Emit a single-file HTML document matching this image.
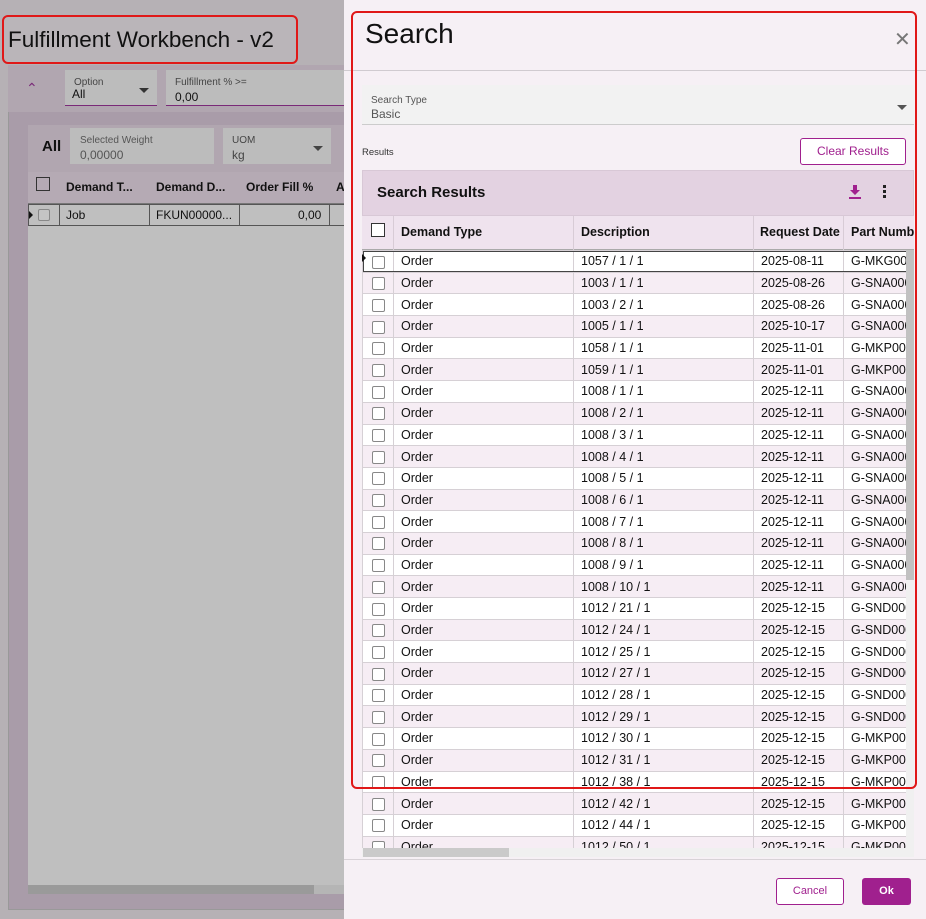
<!DOCTYPE html>
<html><head><meta charset="utf-8"><style>
*{margin:0;padding:0;box-sizing:border-box}
body{width:926px;height:919px;overflow:hidden;position:relative;background:#b6b1b5;font-family:"Liberation Sans",sans-serif;color:#111}
.a{position:absolute}
.cb{position:absolute;width:12px;height:12px;border:1px solid #888;border-radius:2px;background:#fff}
table.t{border-collapse:collapse;table-layout:fixed;width:544px;font-size:12.5px;background:#fff}
table.t td{height:21.7px;border:1px solid #d6d0d5;padding:0 0 0 7px;white-space:nowrap;overflow:hidden;line-height:20px}
table.t tr:nth-child(even) td{background:#f6edf4}
table.t td.k{padding:0;text-align:center}
table.t td.k i{display:inline-block;width:13px;height:13px;border:1px solid #888;border-radius:2px;background:#fff;vertical-align:middle}
</style></head><body>
<div class="a" style="left:3px;top:16px;width:294px;height:47px;background:#bab5b9;border-radius:6px"></div>
<div class="a" style="left:8px;top:27px;font-size:22.5px;color:#111">Fulfillment Workbench - v2</div>
<div class="a" style="left:2px;top:15px;width:296px;height:49px;border:2px solid #e01818;border-radius:6px"></div>
<div class="a" style="left:8px;top:65px;width:336px;height:845px;background:#a99ca9;border-left:1px solid #999;border-bottom:1px solid #999"></div>
<div class="a" style="left:8px;top:65px;width:336px;height:47px;background:#b1a6b0"></div>
<div class="a" style="left:26px;top:80px;font-size:14px;color:#7a2a78">&#8963;</div>
<div class="a" style="left:65px;top:70px;width:92px;height:36px;background:#bcbcbc;border-bottom:1px solid #7a2a78"></div>
<div class="a" style="left:74px;top:77px;font-size:10px;color:#444">Option</div>
<div class="a" style="left:72px;top:87px;font-size:12px">All</div>
<div class="a" style="left:139px;top:88px;border-left:5px solid transparent;border-right:5px solid transparent;border-top:5px solid #333"></div>
<div class="a" style="left:166px;top:70px;width:178px;height:36px;background:#bcbcbc;border-bottom:1px solid #7a2a78"></div>
<div class="a" style="left:175px;top:77px;font-size:10px;color:#444">Fulfillment % &gt;=</div>
<div class="a" style="left:175px;top:90px;font-size:12px">0,00</div>
<div class="a" style="left:28px;top:125px;width:316px;height:47px;background:#b1a6b0"></div>
<div class="a" style="left:42px;top:138px;font-size:15px;font-weight:bold">All</div>
<div class="a" style="left:70px;top:128px;width:144px;height:36px;background:#bcbcbc"></div>
<div class="a" style="left:80px;top:135px;font-size:10px;color:#555">Selected Weight</div>
<div class="a" style="left:80px;top:148px;font-size:12px;color:#555">0,00000</div>
<div class="a" style="left:223px;top:128px;width:108px;height:36px;background:#bcbcbc"></div>
<div class="a" style="left:232px;top:135px;font-size:10px;color:#444">UOM</div>
<div class="a" style="left:232px;top:148px;font-size:12px;color:#444">kg</div>
<div class="a" style="left:313px;top:146px;border-left:5px solid transparent;border-right:5px solid transparent;border-top:5px solid #444"></div>
<div class="a" style="left:28px;top:172px;width:316px;height:32px;background:#b5aab4;border-bottom:1px solid #777"></div>
<div class="a" style="left:36px;top:177px;width:14px;height:14px;border:1px solid #333"></div>
<div class="a" style="left:66px;top:180px;font-size:12px;font-weight:bold">Demand T...</div>
<div class="a" style="left:156px;top:180px;font-size:12px;font-weight:bold">Demand D...</div>
<div class="a" style="left:246px;top:180px;font-size:12px;font-weight:bold">Order Fill %</div>
<div class="a" style="left:336px;top:180px;font-size:12px;font-weight:bold">A</div>
<div class="a" style="left:28px;top:204px;width:316px;height:681px;background:#bfbfbf"></div>
<div class="a" style="left:28px;top:204px;width:316px;height:22px;border:1px solid #555;border-right:none"></div>
<div class="a" style="left:59px;top:204px;width:1px;height:22px;background:#555"></div>
<div class="a" style="left:149px;top:204px;width:1px;height:22px;background:#555"></div>
<div class="a" style="left:239px;top:204px;width:1px;height:22px;background:#555"></div>
<div class="a" style="left:329px;top:204px;width:1px;height:22px;background:#555"></div>
<div class="a" style="left:29px;top:211px;border-top:4px solid transparent;border-bottom:4px solid transparent;border-left:4px solid #111"></div>
<div class="cb" style="left:38px;top:209px;background:#c4c4c4"></div>
<div class="a" style="left:66px;top:208px;font-size:12px">Job</div>
<div class="a" style="left:156px;top:208px;font-size:12px">FKUN00000...</div>
<div class="a" style="left:298px;top:208px;font-size:12px">0,00</div>
<div class="a" style="left:28px;top:885px;width:286px;height:9px;background:#9a9a9a"></div>
<div class="a" style="left:314px;top:885px;width:30px;height:9px;background:#b5b5b5"></div>

<div class="a" style="left:344px;top:0;width:582px;height:919px;background:#f6f0f5"></div>
<div class="a" style="left:365px;top:18px;font-size:28px;color:#111">Search</div>
<div class="a" style="left:894px;top:30px;font-size:20px;color:#777;line-height:20px">&#x2715;</div>
<div class="a" style="left:344px;top:70px;width:582px;height:1px;background:#d0cbd0"></div>
<div class="a" style="left:362px;top:85px;width:552px;height:40px;background:#f2f2f2;border-bottom:1px solid #ccc"></div>
<div class="a" style="left:371px;top:95px;font-size:10px;color:#555">Search Type</div>
<div class="a" style="left:371px;top:107px;font-size:12px;color:#555">Basic</div>
<div class="a" style="left:897px;top:105px;border-left:5px solid transparent;border-right:5px solid transparent;border-top:5px solid #555"></div>
<div class="a" style="left:362px;top:147px;font-size:9.5px;color:#333">Results</div>
<div class="a" style="left:800px;top:138px;width:106px;height:27px;border:1px solid #a0208e;border-radius:3px;background:#fff;color:#a0208e;font-size:12px;text-align:center;line-height:25px">Clear Results</div>
<div class="a" style="left:362px;top:170px;width:552px;height:46px;background:#e3d2e1;border:1px solid #d8c8d6"></div>
<div class="a" style="left:377px;top:184px;font-size:15px;font-weight:bold">Search Results</div>
<svg class="a" style="left:848px;top:184px" width="14" height="16" viewBox="0 0 14 16"><path d="M5 1h4v5h3l-5 5-5-5h3z" fill="#a0208e"/><rect x="1" y="13" width="12" height="2" fill="#a0208e"/></svg>
<div class="a" style="left:883px;top:185px;width:3px;height:3px;background:#222;box-shadow:0 5px 0 #222,0 10px 0 #222"></div>
<div class="a" style="left:362px;top:216px;width:552px;height:34px;background:#efe3ee;border-bottom:1px solid #aaa"></div>
<div class="a" style="left:371px;top:223px;width:14px;height:14px;border:1px solid #333;background:#fff"></div>
<div class="a" style="left:393px;top:216px;width:1px;height:34px;background:#d8ccd6"></div>
<div class="a" style="left:573px;top:216px;width:1px;height:34px;background:#d8ccd6"></div>
<div class="a" style="left:753px;top:216px;width:1px;height:34px;background:#d8ccd6"></div>
<div class="a" style="left:843px;top:216px;width:1px;height:34px;background:#d8ccd6"></div>
<div class="a" style="left:401px;top:225px;font-size:12.5px;font-weight:bold">Demand Type</div>
<div class="a" style="left:581px;top:225px;font-size:12.5px;font-weight:bold">Description</div>
<div class="a" style="left:760px;top:225px;font-size:12.5px;font-weight:bold">Request Date</div>
<div class="a" style="left:851px;top:225px;font-size:12.5px;font-weight:bold;white-space:nowrap;width:63px;overflow:hidden">Part Number</div>

<div class="a" style="left:362px;top:250px;width:544px;height:598px;overflow:hidden;background:#fff">
<table class="t">
<colgroup><col style="width:31px"><col style="width:180px"><col style="width:180px"><col style="width:90px"><col style="width:63px"></colgroup>
<tr style="outline:1px solid #444;outline-offset:-1px"><td class="k"><i></i></td><td>Order</td><td>1057 / 1 / 1</td><td>2025-08-11</td><td>G-MKG0000</td></tr>
<tr><td class="k"><i></i></td><td>Order</td><td>1003 / 1 / 1</td><td>2025-08-26</td><td>G-SNA0000</td></tr>
<tr><td class="k"><i></i></td><td>Order</td><td>1003 / 2 / 1</td><td>2025-08-26</td><td>G-SNA0000</td></tr>
<tr><td class="k"><i></i></td><td>Order</td><td>1005 / 1 / 1</td><td>2025-10-17</td><td>G-SNA0000</td></tr>
<tr><td class="k"><i></i></td><td>Order</td><td>1058 / 1 / 1</td><td>2025-11-01</td><td>G-MKP0000</td></tr>
<tr><td class="k"><i></i></td><td>Order</td><td>1059 / 1 / 1</td><td>2025-11-01</td><td>G-MKP0000</td></tr>
<tr><td class="k"><i></i></td><td>Order</td><td>1008 / 1 / 1</td><td>2025-12-11</td><td>G-SNA0000</td></tr>
<tr><td class="k"><i></i></td><td>Order</td><td>1008 / 2 / 1</td><td>2025-12-11</td><td>G-SNA0000</td></tr>
<tr><td class="k"><i></i></td><td>Order</td><td>1008 / 3 / 1</td><td>2025-12-11</td><td>G-SNA0000</td></tr>
<tr><td class="k"><i></i></td><td>Order</td><td>1008 / 4 / 1</td><td>2025-12-11</td><td>G-SNA0000</td></tr>
<tr><td class="k"><i></i></td><td>Order</td><td>1008 / 5 / 1</td><td>2025-12-11</td><td>G-SNA0000</td></tr>
<tr><td class="k"><i></i></td><td>Order</td><td>1008 / 6 / 1</td><td>2025-12-11</td><td>G-SNA0000</td></tr>
<tr><td class="k"><i></i></td><td>Order</td><td>1008 / 7 / 1</td><td>2025-12-11</td><td>G-SNA0000</td></tr>
<tr><td class="k"><i></i></td><td>Order</td><td>1008 / 8 / 1</td><td>2025-12-11</td><td>G-SNA0000</td></tr>
<tr><td class="k"><i></i></td><td>Order</td><td>1008 / 9 / 1</td><td>2025-12-11</td><td>G-SNA0000</td></tr>
<tr><td class="k"><i></i></td><td>Order</td><td>1008 / 10 / 1</td><td>2025-12-11</td><td>G-SNA0000</td></tr>
<tr><td class="k"><i></i></td><td>Order</td><td>1012 / 21 / 1</td><td>2025-12-15</td><td>G-SND0000</td></tr>
<tr><td class="k"><i></i></td><td>Order</td><td>1012 / 24 / 1</td><td>2025-12-15</td><td>G-SND0000</td></tr>
<tr><td class="k"><i></i></td><td>Order</td><td>1012 / 25 / 1</td><td>2025-12-15</td><td>G-SND0000</td></tr>
<tr><td class="k"><i></i></td><td>Order</td><td>1012 / 27 / 1</td><td>2025-12-15</td><td>G-SND0000</td></tr>
<tr><td class="k"><i></i></td><td>Order</td><td>1012 / 28 / 1</td><td>2025-12-15</td><td>G-SND0000</td></tr>
<tr><td class="k"><i></i></td><td>Order</td><td>1012 / 29 / 1</td><td>2025-12-15</td><td>G-SND0000</td></tr>
<tr><td class="k"><i></i></td><td>Order</td><td>1012 / 30 / 1</td><td>2025-12-15</td><td>G-MKP000</td></tr>
<tr><td class="k"><i></i></td><td>Order</td><td>1012 / 31 / 1</td><td>2025-12-15</td><td>G-MKP000</td></tr>
<tr><td class="k"><i></i></td><td>Order</td><td>1012 / 38 / 1</td><td>2025-12-15</td><td>G-MKP000</td></tr>
<tr><td class="k"><i></i></td><td>Order</td><td>1012 / 42 / 1</td><td>2025-12-15</td><td>G-MKP000</td></tr>
<tr><td class="k"><i></i></td><td>Order</td><td>1012 / 44 / 1</td><td>2025-12-15</td><td>G-MKP000</td></tr>
<tr><td class="k"><i></i></td><td>Order</td><td>1012 / 50 / 1</td><td>2025-12-15</td><td>G-MKP000</td></tr>
</table>
</div>
<div class="a" style="left:362px;top:254px;border-top:4px solid transparent;border-bottom:4px solid transparent;border-left:4px solid #111"></div>
<div class="a" style="left:906px;top:250px;width:8px;height:598px;background:#f0f0f0"></div>
<div class="a" style="left:906px;top:250px;width:8px;height:330px;background:#c1c1c1"></div>
<div class="a" style="left:362px;top:848px;width:552px;height:9px;background:#f0f0f0"></div>
<div class="a" style="left:363px;top:848px;width:146px;height:9px;background:#cacaca"></div>
<div class="a" style="left:344px;top:859px;width:582px;height:1px;background:#d8d2d7"></div>
<div class="a" style="left:776px;top:878px;width:68px;height:27px;border:1px solid #a0208e;border-radius:3px;background:#fff;color:#a0208e;font-size:11px;text-align:center;line-height:25px">Cancel</div>
<div class="a" style="left:862px;top:878px;width:49px;height:27px;border-radius:3px;background:#a0208e;color:#fff;font-size:11px;font-weight:bold;text-align:center;line-height:27px">Ok</div>
<div class="a" style="left:351px;top:11px;width:566px;height:778px;border:2px solid #e01818;border-radius:6px"></div>
</body></html>
